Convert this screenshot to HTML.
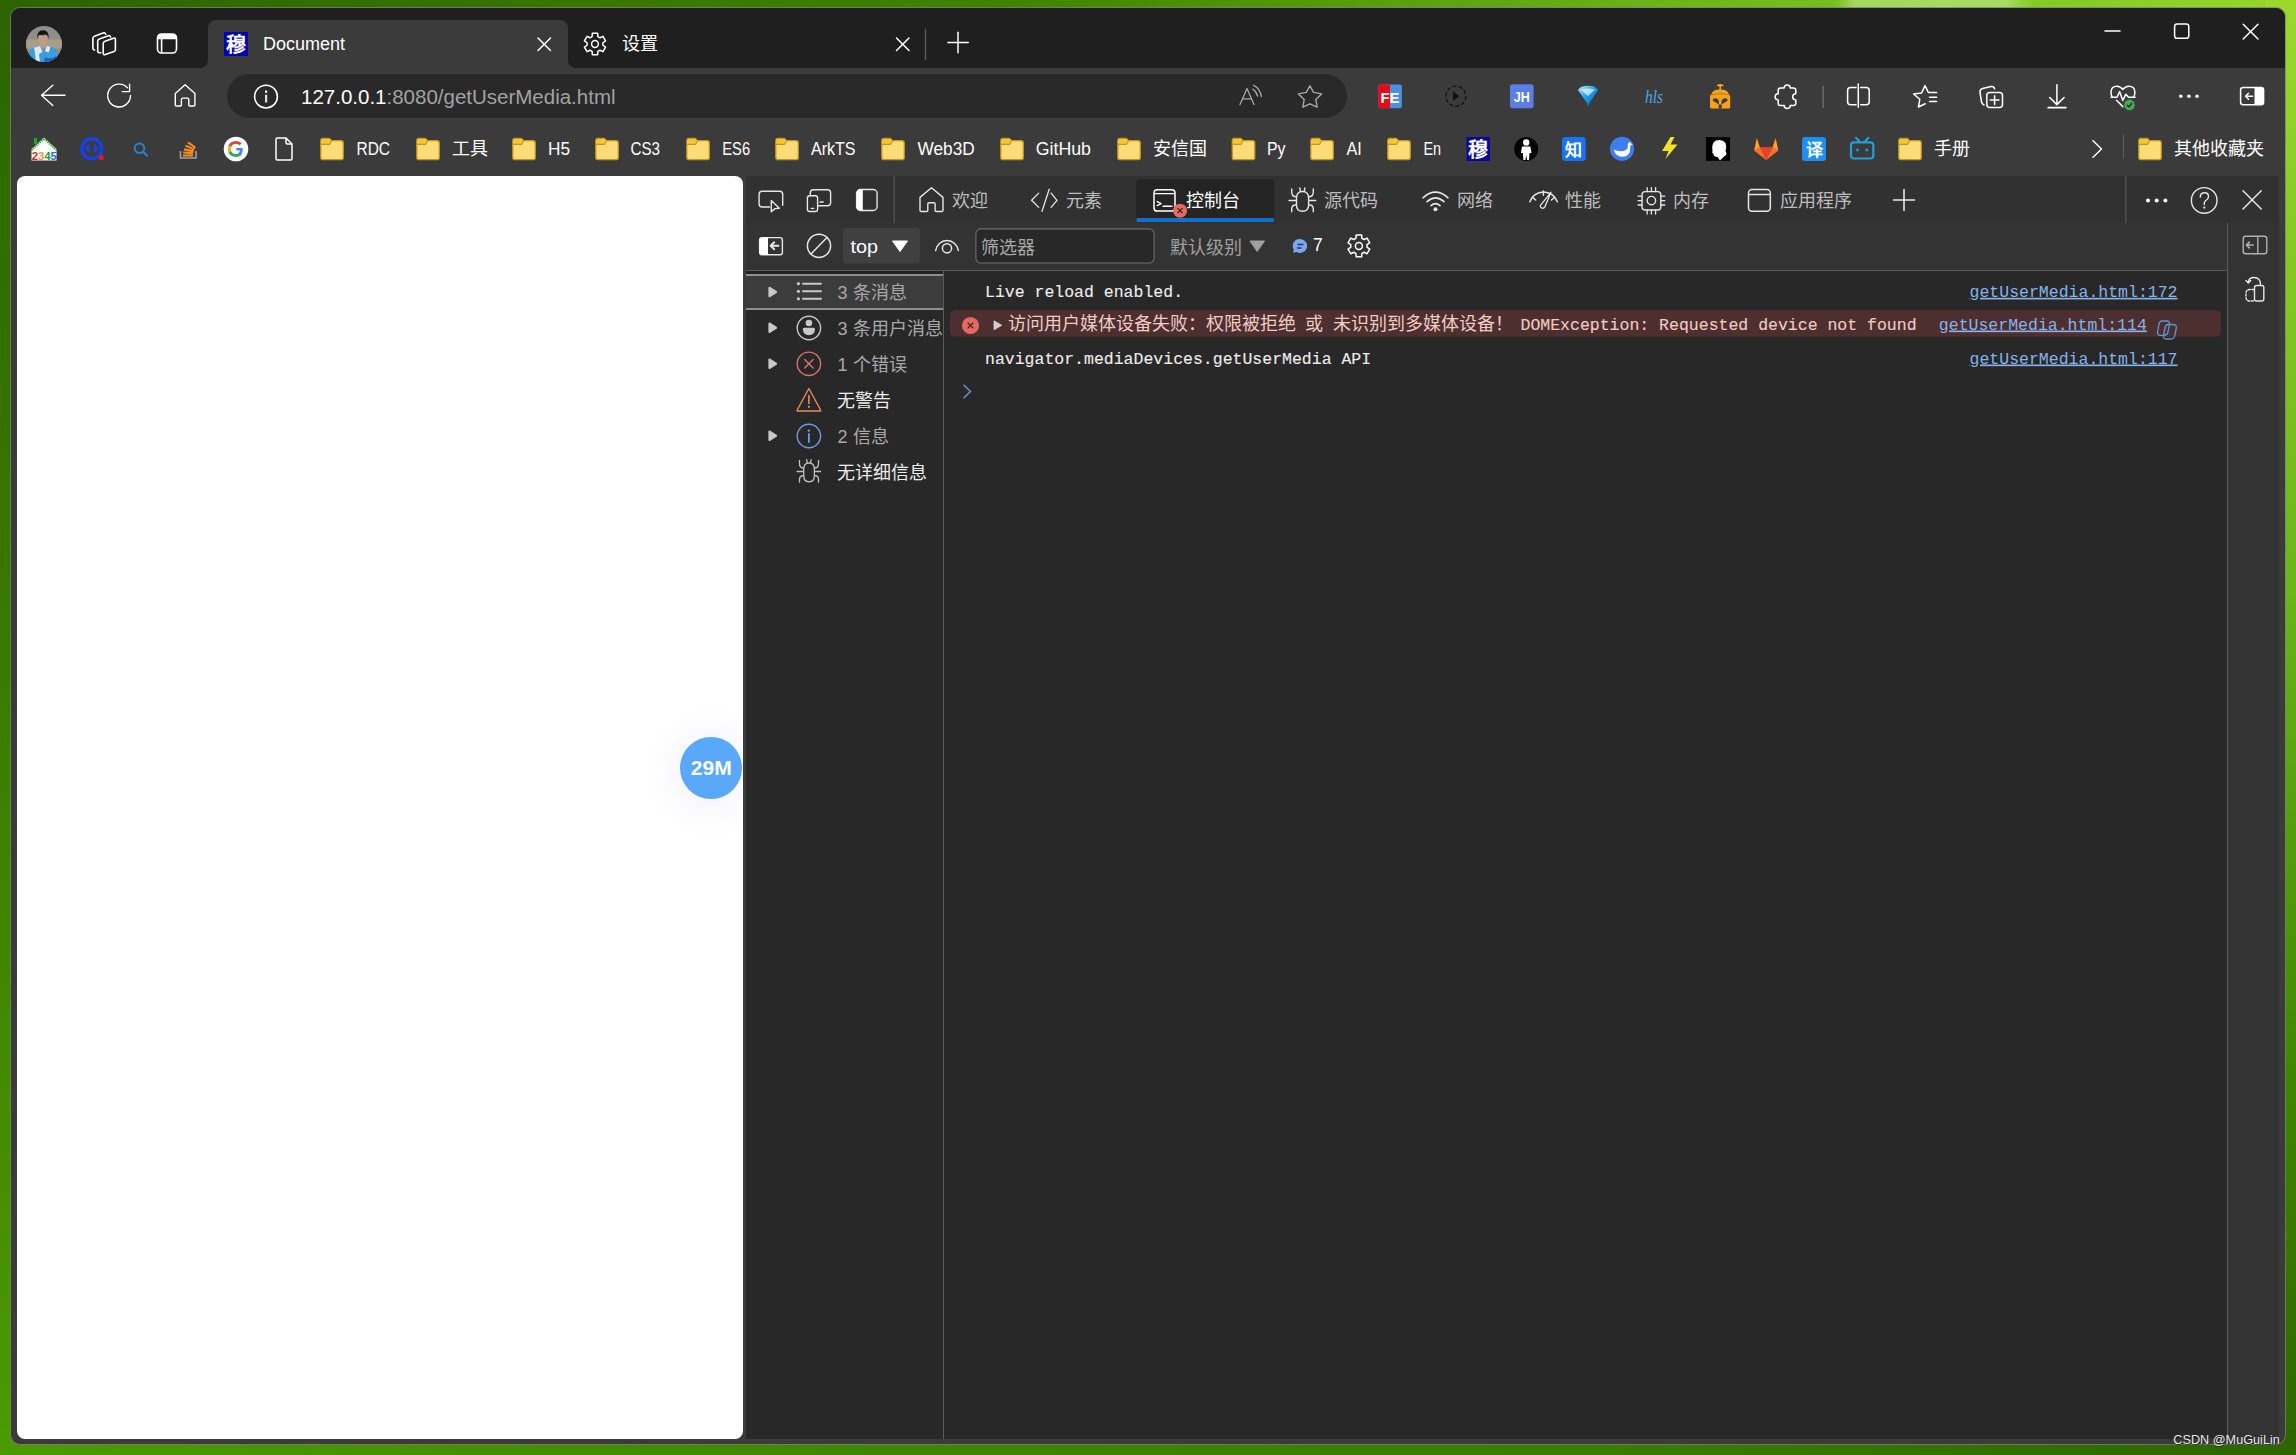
<!DOCTYPE html>
<html lang="zh-CN"><head><meta charset="utf-8">
<style>
*{box-sizing:border-box}
html,body{margin:0;padding:0}
body{width:2296px;height:1455px;overflow:hidden;position:relative;font-family:"Liberation Sans",sans-serif;
background:linear-gradient(90deg,#2c6300 0%,#3f8500 45%,#6fb81c 75%,#95d62c 100%);}
.a{position:absolute}
svg{position:absolute;overflow:visible}
.t{position:absolute;white-space:pre;line-height:1}
.mono{font-family:"Liberation Mono",monospace}
</style></head><body>
<!-- background shading -->
<div class="a" style="left:0;top:0;width:2296px;height:1455px;background:linear-gradient(180deg,rgba(0,0,0,0) 0%,rgba(0,0,0,0) 40%,rgba(40,90,0,.35) 100%)"></div>
<div class="a" style="left:0;top:0;width:30px;height:1455px;background:linear-gradient(180deg,#2c6400 0%,#3a7d00 50%,#4a9a00 100%)"></div>
<div class="a" style="left:2266px;top:0;width:30px;height:1455px;background:linear-gradient(180deg,#9ad82e 0%,#6cb51a 40%,#3f8400 75%,#2d6500 100%)"></div>
<div class="a" style="left:0;top:1430px;width:2296px;height:25px;background:linear-gradient(90deg,#4a9a00 0%,#3f8500 40%,#3a7c00 70%,#2d6500 100%)"></div>

<div class="a" style="left:1835px;top:0;width:200px;height:10px;background:linear-gradient(90deg,rgba(200,235,150,0) 0%,rgba(200,235,150,.55) 10%,rgba(200,235,150,.55) 85%,rgba(200,235,150,0) 100%)"></div>
<!-- window -->
<div class="a" style="left:10px;top:7px;width:2276px;height:1438px;border-radius:10px;background:rgba(120,130,110,.75)"></div>
<div class="a" id="win" style="left:11px;top:8px;width:2274px;height:1436px;border-radius:9px;background:#3b3b3b;overflow:hidden">
  <div class="a" style="left:0;top:0;width:2274px;height:60px;background:#1f1f1f"></div>
</div>

<!-- active tab -->
<div class="a" style="left:208px;top:20px;width:360px;height:48px;background:#3b3b3b;border-radius:8px 8px 0 0"></div>
<div class="a" style="left:200px;top:60px;width:8px;height:8px;background:radial-gradient(circle at 0 0,#1f1f1f 7.5px,#3b3b3b 8.5px)"></div>
<div class="a" style="left:568px;top:60px;width:8px;height:8px;background:radial-gradient(circle at 100% 0,#1f1f1f 7.5px,#3b3b3b 8.5px)"></div>

<!-- address bar -->
<div class="a" style="left:227px;top:74px;width:1120px;height:44px;border-radius:22px;background:#292929"></div>

<!-- page -->
<div class="a" style="left:17px;top:176px;width:726px;height:1263px;border-radius:8px;background:#fff;overflow:hidden">
  <div class="a" style="left:662.5px;top:560.5px;width:62.5px;height:62.5px;border-radius:50%;background:#5aa8fa;box-shadow:0 4px 40px rgba(90,90,200,.12)"></div>
</div>

<!-- devtools -->
<div class="a" id="dt" style="left:746px;top:176px;width:1533px;height:1263px;background:#282828;overflow:hidden">
  <div class="a" style="left:0;top:0;width:1533px;height:47px;background:#313131"></div>
  <div class="a" style="left:0;top:47px;width:1482px;height:48px;background:#333333;border-bottom:1px solid #5a5a5a"></div>
  <div class="a" style="left:1481px;top:47px;width:52px;height:1216px;background:#333333;border-left:1px solid #5a5a5a"></div>
  <div class="a" style="left:197px;top:95px;width:1px;height:1168px;background:#5a5a5a"></div>
</div>


<!-- ===== TAB STRIP / TOOLBAR OVERLAY ===== -->
<svg class="a" style="left:0;top:0" width="2296" height="1455" viewBox="0 0 2296 1455">
<defs>
<clipPath id="avc"><circle cx="44" cy="44" r="18"/></clipPath>
</defs>
<!-- avatar -->
<g clip-path="url(#avc)">
<rect x="26" y="26" width="36" height="36" fill="#8e8d88"/>
<rect x="26" y="39.5" width="36" height="9" fill="#ab9d8c"/>
<path d="M38.6,36 Q38.2,45.5 43,45.6 Q47.6,45.5 47.4,36Z" fill="#c59a84"/>
<path d="M37.2,39 Q36.6,30.3 43,30.3 Q49.3,30.3 48.8,39.5 Q48,35.5 46.5,34.5 Q42.5,35.2 39,34.8 Q38,36 37.2,39Z" fill="#161413"/>
<path d="M27,62 Q27.5,49 34,47.5 L40,46 L43.5,51 L47,46 L53,47.5 Q58.5,49.5 59,62Z" fill="#3c9ce0"/>
<path d="M34,47.8 L40,46 L42.5,52 L39,54 L40,62 L36,62 Q35,52 34,47.8Z" fill="#dfe8ee"/>
<path d="M47,46 L50.5,47 L48.5,52.5 L45,51Z" fill="#e8eef2"/>
<path d="M45,57 Q51,60 56,56 L57,62 L44,62Z" fill="#1f5fc8"/>
</g>
<g fill="none" stroke="#fff" stroke-width="1.6" stroke-linejoin="round" stroke-linecap="round">
<!-- tab actions -->
<path d="M105,41.2 L113.5,38.2 Q115.4,37.6 115.4,39.6 L115.4,49.7 Q115.4,51 114,51.6 L105.3,54.6 Q103.2,55.3 103.2,53.2 L103.2,43.5 Q103.2,41.8 105,41.2Z"/>
<path d="M100.8,52.8 L99.6,52.8 Q97.7,52.8 97.7,50.8 L97.7,41.2 Q97.7,39.6 99.3,39 L107.8,35.9 Q110,35.1 110.6,37"/>
<path d="M94.7,50 Q92.9,50 92.9,48 L92.9,38.4 Q92.9,36.8 94.5,36.2 L103,33.1 Q105.2,32.4 105.8,34.3"/>
<!-- vertical tabs -->
<rect x="157.5" y="34" width="19" height="19" rx="4"/>
<line x1="161.6" y1="38" x2="161.6" y2="53"/>
</g>
<path d="M157.5,38 Q157.5,34 161.5,34 L172.5,34 Q176.5,34 176.5,38 L176.5,39.2 L157.5,39.2Z" fill="#fff"/>
<!-- favicon -->
<rect x="224" y="32" width="24" height="24" fill="#0000b4"/>
<text x="236" y="51.5" font-size="20" font-weight="700" fill="#fff" text-anchor="middle">穆</text>
<text x="263" y="49.9" font-size="18" fill="#fff">Document</text>
<g stroke="#fff" stroke-width="1.5" stroke-linecap="round">
<line x1="538" y1="38" x2="550.5" y2="50.5"/><line x1="550.5" y1="38" x2="538" y2="50.5"/>
<line x1="896.5" y1="38" x2="909" y2="50.5"/><line x1="909" y1="38" x2="896.5" y2="50.5"/>
<line x1="947.8" y1="42.5" x2="968.3" y2="42.5"/><line x1="958" y1="32.3" x2="958" y2="52.8"/>
<line x1="2105" y1="31" x2="2120" y2="31"/>
<line x1="2243.2" y1="24.2" x2="2258" y2="39"/><line x1="2258" y1="24.2" x2="2243.2" y2="39"/>
</g>
<rect x="2174.6" y="24.1" width="14.2" height="14.2" rx="2.6" fill="none" stroke="#fff" stroke-width="1.5"/>
<line x1="925.5" y1="29" x2="925.5" y2="60" stroke="#5c5c5c" stroke-width="1.3"/>
<!-- settings gear tab -->
<path d="M592.13,36.53 L592.34,33.33 L597.66,33.33 L597.87,36.53 L600.03,37.78 L602.91,36.36 L605.57,40.97 L602.90,42.75 L602.90,45.25 L605.57,47.03 L602.91,51.64 L600.03,50.22 L597.87,51.47 L597.66,54.67 L592.34,54.67 L592.13,51.47 L589.97,50.22 L587.09,51.64 L584.43,47.03 L587.10,45.25 L587.10,42.75 L584.43,40.97 L587.09,36.36 L589.97,37.78Z" fill="none" stroke="#fff" stroke-width="1.5" stroke-linejoin="round"/>
<circle cx="595" cy="44" r="3.4" fill="none" stroke="#fff" stroke-width="1.5"/>
<text x="622" y="50" font-size="18" fill="#fff">设置</text>

<!-- toolbar nav -->
<g fill="none" stroke="#fff" stroke-width="1.4" stroke-linecap="round" stroke-linejoin="round">
<path d="M41.5,95.3 H65 M52.8,85.2 L41.5,95.3 L52.8,105.6"/>
<path d="M130.5,95.5 A11.4,11.4 0 1 1 127.5,87.8"/>
<path d="M129.6,84.3 V91.6 H122.3"/>
<path d="M175.3,105 V93.6 L185.1,84.8 L194.9,93.6 V105 Q194.9,106 193.9,106 H189.8 Q188.8,106 188.8,105 V99.4 Q188.8,98.1 187.5,98.1 H182.7 Q181.4,98.1 181.4,99.4 V105 Q181.4,106 180.4,106 H176.3 Q175.3,106 175.3,105Z"/>
<circle cx="266" cy="96.6" r="11.4" stroke-width="1.6"/>
</g>
<rect x="265" y="90.5" width="2.2" height="2.3" fill="#fff"/>
<rect x="265" y="94.7" width="2.2" height="7.8" fill="#e0e0e0"/>
<text font-size="20.5" y="104.3"><tspan x="301" fill="#fff">127.0.0.1</tspan><tspan fill="#a2a2a2">:8080/getUserMedia.html</tspan></text>
<g fill="none" stroke="#a8a8a8" stroke-width="1.3" stroke-linecap="round" stroke-linejoin="round">
<path d="M1240,104.6 L1247,88.5 L1254,104.6 M1243.1,98.8 H1250.9"/>
<path d="M1252.8,89.2 Q1256.5,91.5 1257.6,96"/>
<path d="M1253.7,85.3 Q1260.2,88.5 1261.4,96.6"/>
<path d="M1309.9,85.8 L1313.6,92.4 L1321.6,93.9 L1315.8,99.6 L1317.2,107.1 L1309.9,103.8 L1302.8,107.1 L1304.2,99.6 L1298.4,93.9 L1306.2,92.4Z" stroke-width="1.4"/>
</g>
</svg>

<svg class="a" style="left:0;top:0" width="2296" height="1455" viewBox="0 0 2296 1455">
<defs>
<g id="fold">
<path d="M0.8,19.8 V3 Q0.8,0.7 3,0.7 H9.3 L11.6,3 H21 Q23.3,3 23.3,5.3 V19.8 Q23.3,22 21,22 H3 Q0.8,22 0.8,19.8Z" fill="#fcdc78" stroke="#c4961a" stroke-width="1.3"/>
<path d="M1.3,6.5 V3.2 Q1.3,1.3 3.2,1.3 H9 L11.2,3.2 L9.2,6.5Z" fill="#f3c53a"/>
<path d="M0.9,6.8 H9.4 L11.6,3.2" fill="none" stroke="#c4961a" stroke-width="1.1"/>
</g>
</defs>
<!-- extension icons -->
<rect x="1378.2" y="84.4" width="23.7" height="23.8" rx="2" fill="#4b8fe0"/>
<path d="M1380.2,84.4 H1389.9 V108.2 H1380.2 Q1378.2,108.2 1378.2,106.2 V86.4 Q1378.2,84.4 1380.2,84.4Z" fill="#e60a14"/>
<text x="1390" y="102.6" font-size="15" font-weight="700" fill="#fff" text-anchor="middle" textLength="19" lengthAdjust="spacingAndGlyphs">FE</text>
<circle cx="1455.9" cy="96.2" r="10" fill="none" stroke="#111" stroke-width="1.3" stroke-dasharray="4 2.2"/>
<path d="M1453,91.3 L1459.3,96.2 L1453,101.1Z" fill="#111"/>
<rect x="1510" y="84.2" width="23.6" height="24" rx="2.5" fill="#5d7de6"/>
<text x="1521.8" y="102.3" font-size="14.5" font-weight="700" fill="#fff" text-anchor="middle" textLength="16" lengthAdjust="spacingAndGlyphs">JH</text>
<defs><linearGradient id="dia" x1="0" y1="0" x2="1" y2="1"><stop offset="0" stop-color="#bfeaff"/><stop offset=".5" stop-color="#1a9ae8"/><stop offset="1" stop-color="#0a4fa0"/></linearGradient></defs>
<path d="M1578,90 Q1580,85.7 1588,85.7 Q1596,85.7 1598,90 L1589.5,103 L1588.5,107 L1587,103Z" fill="url(#dia)"/>
<path d="M1581,89.5 Q1588,87.5 1595,89.5 L1588,96Z" fill="#e8f8ff" opacity=".7"/>
<text x="1645" y="103" font-family="Liberation Serif" font-style="italic" font-size="19" fill="#4aa6ea" textLength="18" lengthAdjust="spacingAndGlyphs">hls</text>
<path d="M1716.6,86.3 Q1717,84 1720.2,84 Q1723.4,84 1723.7,86.3Z M1719.4,86 H1721 V90.5 H1719.4Z" fill="#f6a521"/>
<path d="M1711.3,94.8 Q1712,89.6 1720.2,89.6 Q1728.3,89.6 1729,94.8Z" fill="#f6a521"/>
<path d="M1710,96.2 Q1710,94.6 1712,94.6 H1728.3 Q1730.2,94.6 1730.2,96.2 V107 Q1730.2,108.5 1728.6,108.5 H1712 Q1710,108.5 1710,107Z" fill="#f7a01a"/>
<path d="M1712.7,99.8 Q1713.3,98 1716,98.3 Q1718.8,99 1718.9,101.5 V104.6 Q1717.3,103 1714.8,102 Q1712.4,101.2 1712.7,99.8Z M1727.7,99.8 Q1727.1,98 1724.4,98.3 Q1721.6,99 1721.5,101.5 V104.6 Q1723.1,103 1725.6,102 Q1728,101.2 1727.7,99.8Z M1718.7,104.4 H1721.7 V108.6 H1718.7Z" fill="#3b3b3b"/>
<path d="M1712,94.6 Q1720.2,92 1728.3,94.6" fill="none" stroke="#b87010" stroke-width="0.8"/>
<g fill="none" stroke="#fff" stroke-width="1.5" stroke-linejoin="round" stroke-linecap="round">
<path d="M1780.5,88 H1784.2 A3,3 0 0 1 1790.2,88 H1793.5 Q1795.8,88 1795.8,90.3 V93.7 A3.1,3.1 0 0 0 1795.8,99.9 V103.3 Q1795.8,105.6 1793.5,105.6 H1790.2 A3,3 0 0 1 1784.2,105.6 H1780.5 Q1778.2,105.6 1778.2,103.3 V99.9 A3.1,3.1 0 0 1 1778.2,93.7 V90.3 Q1778.2,88 1780.5,88Z"/>
<path d="M1856,87.4 H1850.6 Q1847.6,87.4 1847.6,90.4 V101.7 Q1847.6,104.7 1850.6,104.7 H1856 M1860.7,87.4 H1866.2 Q1869.2,87.4 1869.2,90.4 V101.7 Q1869.2,104.7 1866.2,104.7 H1860.7"/>
<path d="M1858.3,84 V107.3"/>
<path d="M1925.2,103.8 L1918.4,107 L1919.8,99.3 L1913.6,94 L1921.6,93 L1925,85.6 L1928.4,92.5 H1936.6 M1929.5,97.2 H1936.6 M1929.5,101.6 H1936.6"/>
<path d="M1994.6,88.8 Q1994,86 1991,86.6 L1982.6,88.5 Q1979.6,89.3 1980,92.3 L1981.5,102 Q1982,104 1984,105"/>
<rect x="1986.8" y="92.6" width="15.7" height="15" rx="3"/>
<path d="M1994.6,95.8 V104.5 M1990.3,100.1 H1999"/>
<path d="M2056.9,84.8 V104.4 M2049.7,97.5 L2056.9,104.6 L2064.1,97.5"/>
<path d="M2048.2,107.7 H2065.8" stroke-width="1.7"/>
<path d="M2116.5,100.3 L2122.8,106.6 M2112.2,97.2 Q2111,95 2111,92.3 Q2111,86.2 2117,86.2 Q2120.5,86.2 2122.8,89.5 Q2125.2,86.2 2128.8,86.2 Q2134.9,86.2 2134.9,92.3 Q2134.9,95 2133.6,97.2"/>
<path d="M2111,97.2 H2117 L2119.6,91.6 L2122.8,100.4 L2125.9,94.2 L2128.5,97.2 H2135"/>
<rect x="2240.6" y="87.5" width="23" height="17.2" rx="2.5"/>
<path d="M2252.5,96.2 H2245.5 M2248.5,93.2 L2245.5,96.2 L2248.5,99.2"/>
</g>
<line x1="1823.2" y1="86" x2="1823.2" y2="108" stroke="#6a6a6a" stroke-width="1.5"/>
<circle cx="2129.5" cy="104.9" r="5.3" fill="#3fae4a"/>
<path d="M2127,105 L2128.8,106.8 L2132,103" fill="none" stroke="#1a1a1a" stroke-width="1.3"/>
<path d="M2254.5,87.5 H2261.1 Q2263.6,87.5 2263.6,90 V102.2 Q2263.6,104.7 2261.1,104.7 H2254.5Z" fill="#fff"/>
<circle cx="2180.8" cy="96.2" r="1.8" fill="#fff"/><circle cx="2188.9" cy="96.2" r="1.8" fill="#fff"/><circle cx="2197" cy="96.2" r="1.8" fill="#fff"/>

<!-- bookmarks -->
<path d="M31.5,149 L44,137.5 L56.5,149 V160.5 H31.5Z" fill="#fff"/>
<path d="M31.5,150 L44,138.5 L56.5,150" fill="none" stroke="#2a9a2a" stroke-width="2.2" stroke-dasharray="1.3 0.9"/>
<rect x="34" y="138" width="3" height="6" fill="#2aa02a"/>
<g font-size="11" font-weight="700" font-family="Liberation Sans"><text x="31.8" y="159.5" fill="#e02424" textLength="6.3" lengthAdjust="spacingAndGlyphs">2</text><text x="38.1" y="159.5" fill="#f09a30" textLength="6.3" lengthAdjust="spacingAndGlyphs">3</text><text x="44.4" y="159.5" fill="#2a9a2a" textLength="6.1" lengthAdjust="spacingAndGlyphs">4</text><text x="50.4" y="159.5" fill="#2070d0" textLength="6.1" lengthAdjust="spacingAndGlyphs">5</text></g>
<circle cx="91.8" cy="148.7" r="10" fill="none" stroke="#1740f0" stroke-width="3.2"/>
<path d="M88.5,146 L85.8,148.7 L88.5,151.4 Z M95,146 L97.7,148.7 L95,151.4Z" fill="#1740f0" stroke="#1740f0" stroke-width="2"/>
<circle cx="101.3" cy="157.6" r="2.6" fill="#e81818"/>
<circle cx="139.5" cy="148.3" r="4.8" fill="none" stroke="#2a7fd4" stroke-width="2"/>
<path d="M143,151.8 L147,155.8" stroke="#2a7fd4" stroke-width="2.2" stroke-linecap="round"/>
<path d="M180.5,151 V158 H196 V151" fill="none" stroke="#a0a0a0" stroke-width="1.6"/>
<g stroke="#f08a24" stroke-width="2.2"><line x1="183" y1="155.5" x2="193" y2="155.5"/><line x1="183.3" y1="152.5" x2="193.2" y2="153.3"/><line x1="184" y1="149.3" x2="193.6" y2="151.3"/><line x1="185.5" y1="145.8" x2="194.3" y2="149.5"/><line x1="188" y1="142.3" x2="195.5" y2="147.8"/></g>
<circle cx="236" cy="149" r="12.3" fill="#fff"/>
<path d="M242.8,148 H236.3 V150.6 H240 Q239.2,154.2 235.8,154.2 Q230.6,154 230.6,149 Q230.6,143.8 235.9,143.7 Q238.2,143.7 239.7,145.1 L241.6,143.2 Q239.5,141.2 235.9,141.2 Q228,141.3 228,149 Q228,156.7 235.9,156.8 Q243.2,156.7 242.8,148Z" fill="#4285f4"/>
<path d="M228.9,145.3 L231.2,146.9 Q232.4,143.7 235.9,143.7 Q238.2,143.7 239.7,145.1 L241.6,143.2 Q239.5,141.2 235.9,141.2 Q231,141.3 228.9,145.3Z" fill="#ea4335"/>
<path d="M228.9,145.3 Q227,149 228.9,152.7 L231.1,151 Q230.2,149 231.2,146.9Z" fill="#fbbc05"/>
<path d="M228.9,152.7 Q231,156.8 235.9,156.8 Q239.7,156.8 241.7,154.6 L239.6,152.9 Q238.3,154.2 235.8,154.2 Q232.2,154.2 231.1,151Z" fill="#34a853"/>
<path d="M277.5,138 H286 L292,144 V158.5 Q292,160 290.5,160 H277.5 Q276,160 276,158.5 V139.5 Q276,138 277.5,138Z M286,138 V142.5 Q286,144 287.5,144 H292" fill="none" stroke="#fff" stroke-width="1.5" stroke-linejoin="round"/>
<rect x="1466.5" y="137" width="23.5" height="24" fill="#0a0a9a"/>
<text x="1478.2" y="156.5" font-size="20" font-weight="700" fill="#fff" text-anchor="middle">穆</text>
<circle cx="1526.2" cy="149" r="12" fill="#050505"/>
<circle cx="1526.2" cy="142.5" r="3.2" fill="#fff"/>
<path d="M1522,146.5 H1530.4 L1531.5,153 H1529.5 L1529,160 H1527 L1526.2,155 L1525.4,160 H1523.4 L1522.9,153 H1520.9Z" fill="#fff"/>
<rect x="1562" y="137" width="23.8" height="24" rx="3" fill="#1772f6"/>
<text x="1573.9" y="156" font-size="17" font-weight="700" fill="#fff" text-anchor="middle">知</text>
<circle cx="1622" cy="148.8" r="12.1" fill="#3d7ff0"/>
<path d="M1613.8,149.5 Q1617,151.3 1621.5,151.2 Q1627.6,150.8 1627.8,146.5 V144.5 Q1627.8,142.3 1629.6,142.3 Q1631.2,142.3 1631.4,143.8 L1633,144.8 L1630.6,145.1 L1630.2,147.5 Q1630.5,156.8 1622.5,156.8 Q1615.3,156.7 1613.8,149.5Z" fill="#fff"/>
<path d="M1670.5,137 L1662,151 H1668.5 L1665.5,159 L1677.5,144.5 H1670.5 L1674.5,137Z" fill="#f5e02c"/>
<rect x="1706" y="137" width="24" height="23.8" fill="#000"/>
<path d="M1712.5,151 Q1711,143 1716,140.5 Q1722,138.5 1725.5,143 Q1727,147 1725.5,151 Q1728,155 1724,156.5 L1720,160.5 L1717.5,157 Q1713.5,157 1713.5,154 Q1711.5,153 1712.5,151Z" fill="#fff"/>
<path d="M1766.2,160 L1754.2,150.5 L1756.8,138.3 L1759.8,147.2 H1772.6 L1775.6,138.3 L1778.2,150.5Z" fill="#e24329"/>
<path d="M1766.2,160 L1754.2,150.5 L1759.8,147.2Z M1766.2,160 L1778.2,150.5 L1772.6,147.2Z" fill="#fc6d26"/>
<path d="M1766.2,160 L1759.8,147.2 H1772.6Z" fill="#e24329"/>
<path d="M1754.2,150.5 L1756.8,138.3 L1759.8,147.2Z M1778.2,150.5 L1775.6,138.3 L1772.6,147.2Z" fill="#fca326"/>
<rect x="1802" y="137" width="24" height="24" rx="3" fill="#1e8ff0"/>
<text x="1814" y="156" font-size="17" font-weight="700" fill="#fff" text-anchor="middle">译</text>
<g fill="none" stroke="#20a0d8" stroke-width="2.2" stroke-linecap="round"><rect x="1851" y="142.3" width="22.3" height="16.2" rx="3"/><path d="M1856,137.8 L1859.5,141.5 M1868.5,137.8 L1865,141.5"/></g>
<circle cx="1857.5" cy="150" r="1.4" fill="#20a0d8"/><circle cx="1866.8" cy="150" r="1.4" fill="#20a0d8"/>
<path d="M2092.5,140.2 L2101.5,149 L2092.5,157.8" fill="none" stroke="#fff" stroke-width="1.4"/>
<line x1="2123.5" y1="134.5" x2="2123.5" y2="158" stroke="#5c5c5c" stroke-width="1.2"/>
<use href="#fold" x="320" y="137.6"/>
<text x="356.5" y="155" font-size="18" fill="#fff" textLength="33.5" lengthAdjust="spacingAndGlyphs">RDC</text>
<use href="#fold" x="416" y="137.6"/>
<text x="452" y="155.3" font-size="18" fill="#fff">工具</text>
<use href="#fold" x="512" y="137.6"/>
<text x="548" y="155" font-size="18" fill="#fff" textLength="22" lengthAdjust="spacingAndGlyphs">H5</text>
<use href="#fold" x="595" y="137.6"/>
<text x="630.5" y="155" font-size="18" fill="#fff" textLength="29.5" lengthAdjust="spacingAndGlyphs">CS3</text>
<use href="#fold" x="686" y="137.6"/>
<text x="722.3" y="155" font-size="18" fill="#fff" textLength="27.8" lengthAdjust="spacingAndGlyphs">ES6</text>
<use href="#fold" x="775" y="137.6"/>
<text x="811" y="155" font-size="18" fill="#fff" textLength="44.5" lengthAdjust="spacingAndGlyphs">ArkTS</text>
<use href="#fold" x="881" y="137.6"/>
<text x="917.5" y="155" font-size="18" fill="#fff" textLength="57.3" lengthAdjust="spacingAndGlyphs">Web3D</text>
<use href="#fold" x="1000" y="137.6"/>
<text x="1035.7" y="155" font-size="18" fill="#fff" textLength="55.3" lengthAdjust="spacingAndGlyphs">GitHub</text>
<use href="#fold" x="1117" y="137.6"/>
<text x="1152.5" y="155.3" font-size="18" fill="#fff">安信国</text>
<use href="#fold" x="1231.5" y="137.6"/>
<text x="1267" y="155" font-size="18" fill="#fff" textLength="18.5" lengthAdjust="spacingAndGlyphs">Py</text>
<use href="#fold" x="1310" y="137.6"/>
<text x="1346.5" y="155" font-size="18" fill="#fff" textLength="15.3" lengthAdjust="spacingAndGlyphs">AI</text>
<use href="#fold" x="1387" y="137.6"/>
<text x="1423.4" y="155" font-size="18" fill="#fff" textLength="17.6" lengthAdjust="spacingAndGlyphs">En</text>
<use href="#fold" x="1898" y="137.6"/>
<text x="1934.3" y="155.3" font-size="18" fill="#fff">手册</text>
<use href="#fold" x="2138" y="137.6"/>
<text x="2174" y="155.3" font-size="18" fill="#fff">其他收藏夹</text>
</svg>

<!-- ===== DEVTOOLS ===== -->
<svg class="a" style="left:0;top:0" width="2296" height="1455" viewBox="0 0 2296 1455"><defs><g id="bug"><path d="M0,-9 Q6.1,-9 6.1,-2.5 V4.5 Q6.1,10.8 0,10.8 Q-6,10.8 -6,4.5 V-2.5 Q-6,-9 0,-9Z M-2.7,-12.5 L-2,-9.2 M2.4,-12.5 L1.7,-9.2 M-6,-3.7 Q-10.8,-3.7 -10.8,-8.5 V-11.5 M6.1,-3.7 Q10.8,-3.7 10.8,-8.5 V-11.5 M-6,0 H-13.5 M6.1,0 H13.2 M-6,4.2 Q-10.8,4.2 -10.8,8.5 V11.2 M6.1,4.2 Q10.8,4.2 10.8,8.5 V11.2"/></g></defs>
<!-- active tab -->
<path d="M1136.3,222 V183 Q1136.3,179 1140.3,179 H1270 Q1274,179 1274,183 V222Z" fill="#242424"/>
<rect x="1136.3" y="218" width="137.7" height="4" rx="1.5" fill="#1370c8"/>
<line x1="894.2" y1="176" x2="894.2" y2="223" stroke="#505050" stroke-width="1.5"/>
<line x1="2125.8" y1="176" x2="2125.8" y2="223" stroke="#505050" stroke-width="1.5"/>
<g fill="none" stroke="#e6e6e6" stroke-width="1.4" stroke-linecap="round" stroke-linejoin="round">
<!-- inspect -->
<path d="M769.6,207 H762.1 Q759.1,207 759.1,204 V194.3 Q759.1,191.3 762.1,191.3 H779.7 Q782.7,191.3 782.7,194.3 V205.3"/>
<path d="M771.3,200.6 L779.3,208.3 L775,208.6 L771.3,211.8Z"/>
<!-- device -->
<path d="M810.3,195.6 V192.8 Q810.3,189.8 813.3,189.8 H827.6 Q830.6,189.8 830.6,192.8 V202.7 Q830.6,205.7 827.6,205.7 H818"/>
<rect x="807.4" y="195.7" width="10.2" height="15.8" rx="2.3"/>
<path d="M820,202 H823.2 M811.3,208.4 H813.7"/>
<!-- dock -->
<rect x="856.6" y="189.5" width="20.5" height="21" rx="4"/>
<!-- home -->
<path d="M920,210.3 V197.4 L931.5,187.8 L943,197.4 V210.3 Q943,211.5 941.8,211.5 H936.3 Q935.1,211.5 935.1,210.3 V204 Q935.1,202.8 933.9,202.8 H929 Q927.8,202.8 927.8,204 V210.3 Q927.8,211.5 926.6,211.5 H921.2 Q920,211.5 920,210.3Z"/>
<!-- </> -->
<path d="M1038.7,193.1 L1031.6,200.3 L1038.7,207.4 M1049.2,189.2 L1042,211.3 M1051.1,193.1 L1057,200.3 L1051.1,207.4" stroke-width="1.3"/>
<!-- console -->
<rect x="1154" y="189.8" width="21" height="21.3" rx="3.2" stroke="#fff" stroke-width="1.5"/>
<path d="M1154.4,193.6 H1174.6" stroke="#fff" stroke-width="1.3"/>
<path d="M1157.2,201.6 L1161,203.6 L1157.2,205.6 M1163,206.2 H1172" stroke="#fff" stroke-width="1.4"/>
<!-- bug -->
<use href="#bug" transform="translate(1302.5,200.5)" stroke-width="1.4"/>
<!-- wifi -->
<path d="M1423,197.8 Q1435.5,186.5 1448,197.8 M1427,201.7 Q1435.5,194 1444,201.7 M1431,205.6 Q1435.5,201.5 1440,205.6" stroke-width="1.6"/>
<!-- perf -->
<path d="M1529.8,201.8 A14.5,14.5 0 0 1 1557.3,201.8" stroke-width="1.5"/>
<path d="M1532.8,197.6 L1535.7,200 M1543.4,190.9 V195.2 M1554.3,197.6 L1551.4,200" stroke-width="1.4"/>
<path d="M1551,192.3 L1545,206.6 Q1543.8,208.8 1541.6,208 Q1539.6,207 1540.8,204.8Z" stroke-width="1.3"/>
<!-- memory -->
<rect x="1642" y="191.6" width="18.8" height="18.4" rx="3.2" stroke-width="1.4"/>
<circle cx="1651.4" cy="200.6" r="4.2" stroke-width="1.4"/>
<path d="M1647.2,187.6 V191.6 M1651.4,187.6 V191.6 M1655.6,187.6 V191.6 M1647.2,210 V214 M1651.4,210 V214 M1655.6,210 V214 M1638,196.2 H1642 M1638,200.6 H1642 M1638,205 H1642 M1660.8,196.2 H1664.8 M1660.8,200.6 H1664.8 M1660.8,205 H1664.8" stroke-width="1.3"/>
<!-- app -->
<rect x="1748.5" y="189.5" width="21.8" height="21.8" rx="3.5" stroke-width="1.5"/>
<path d="M1748.8,194.5 H1770" stroke-width="1.4"/>
<!-- plus -->
<path d="M1893.5,200 H1914.5 M1904,189.5 V210.5" stroke-width="1.6"/>
<!-- help/close -->
<circle cx="2204.2" cy="200.4" r="12.8" stroke-width="1.4"/>
<path d="M2200.3,197 Q2200.3,192.8 2204.5,192.8 Q2208.5,192.8 2208.5,196.5 Q2208.5,199 2205.8,200.5 Q2204.3,201.5 2204.3,203.5 V204.5" stroke-width="1.4"/>
<path d="M2243,190.7 L2261.2,209 M2261.2,190.7 L2243,209" stroke-width="1.5"/>
</g>
<path d="M856.6,193.5 Q856.6,189.5 860.6,189.5 H862.8 V210.5 H860.6 Q856.6,210.5 856.6,206.5Z" fill="#fff"/>
<circle cx="2204.3" cy="207.6" r="1.1" fill="#e6e6e6"/>
<circle cx="1435.5" cy="209.3" r="2" fill="#e6e6e6"/>
<circle cx="2148" cy="200.4" r="2" fill="#fff"/><circle cx="2156.7" cy="200.4" r="2" fill="#fff"/><circle cx="2165.4" cy="200.4" r="2" fill="#fff"/>
<circle cx="1180.1" cy="210.7" r="7" fill="#e36b64"/>
<path d="M1177.6,208.2 L1182.6,213.2 M1182.6,208.2 L1177.6,213.2" stroke="#3a1a18" stroke-width="1.2"/>
<!-- tab labels -->
<g font-size="18" fill="#bcbcbc">
<text x="952" y="206.6">欢迎</text>
<text x="1066" y="206.6">元素</text>
<text x="1185.8" y="206.6" fill="#fff">控制台</text>
<text x="1323.7" y="206.6">源代码</text>
<text x="1457" y="206.6">网络</text>
<text x="1564.8" y="206.6">性能</text>
<text x="1673" y="206.6">内存</text>
<text x="1780" y="206.6">应用程序</text>
</g>

<!-- console toolbar -->
<g fill="none" stroke="#e6e6e6" stroke-width="1.4" stroke-linecap="round" stroke-linejoin="round">
<rect x="759.6" y="237.6" width="22.8" height="17.2" rx="2.4"/>
<path d="M778.4,245.8 H770.6 M774.2,242.3 L770.6,245.8 L774.2,249.3" stroke-width="1.9"/>
<circle cx="819" cy="245.8" r="11.6" stroke-width="1.5"/>
<path d="M811,254 L827,237.6" stroke-width="1.5"/>
<path d="M935.6,250.6 A11.5,11.5 0 0 1 958.4,250.6" stroke-width="1.5"/>
<circle cx="947" cy="248.3" r="4.6" stroke-width="1.5"/>
</g>
<path d="M762,237.6 H768 V254.8 H762 Q759.6,254.8 759.6,252.4 V240 Q759.6,237.6 762,237.6Z" fill="#fff"/>
<rect x="843" y="228" width="77" height="35.6" rx="3.5" fill="#404040"/>
<text x="850.5" y="253.4" font-size="19" fill="#fff" textLength="27.5" lengthAdjust="spacingAndGlyphs">top</text>
<path d="M892.5,241 H907.5 L900,251.5Z" fill="#fff" stroke="#fff" stroke-width="1" stroke-linejoin="round"/>
<rect x="975.9" y="228.9" width="178.2" height="34.1" rx="5" fill="#282828" stroke="#6e6e6e" stroke-width="1.1"/>
<text x="980.5" y="254.4" font-size="18" fill="#a8a8a8">筛选器</text>
<text x="1170" y="254.4" font-size="18" fill="#a0a0a0">默认级别</text>
<path d="M1250,241 H1264.5 L1257.2,251.5Z" fill="#a0a0a0" stroke="#a0a0a0" stroke-width="1" stroke-linejoin="round"/>
<path d="M1300,238.9 A7,7 0 1 1 1296.6,252 L1293,252.8 L1293.8,249.5 A7,7 0 0 1 1300,238.9Z" fill="#7aa7f0"/>
<path d="M1297.5,244.5 H1303.5 M1297,248 H1301.5" stroke="#1f3a66" stroke-width="1.6"/>
<text x="1313" y="251" font-size="17.5" fill="#fff">7</text>
<path d="M1355.96,238.24 L1356.17,234.94 L1361.63,234.94 L1361.84,238.24 L1364.06,239.53 L1367.03,238.05 L1369.76,242.79 L1367.00,244.62 L1367.00,247.18 L1369.76,249.01 L1367.03,253.75 L1364.06,252.27 L1361.84,253.56 L1361.63,256.86 L1356.17,256.86 L1355.96,253.56 L1353.74,252.27 L1350.77,253.75 L1348.04,249.01 L1350.80,247.18 L1350.80,244.62 L1348.04,242.79 L1350.77,238.05 L1353.74,239.53Z" fill="none" stroke="#fff" stroke-width="1.5" stroke-linejoin="round"/>
<circle cx="1358.9" cy="245.9" r="3.5" fill="none" stroke="#fff" stroke-width="1.5"/>

<!-- right activity bar icons -->
<g fill="none" stroke="#b0b0b0" stroke-width="1.4" stroke-linejoin="round" stroke-linecap="round">
<rect x="2243.2" y="236.3" width="23.6" height="17.5" rx="2.5"/>
<path d="M2257.8,236.5 V253.6"/>
<path d="M2253,245 H2246.5 M2249.3,242.2 L2246.5,245 L2249.3,247.8" stroke-width="1.7"/>
</g>
<g fill="none" stroke="#e6e6e6" stroke-width="1.4" stroke-linejoin="round" stroke-linecap="round">
<rect x="2254.5" y="285.5" width="9.3" height="15.5" rx="2"/>
<path d="M2254,289.5 H2250 Q2246,289.5 2246,293.5 V297 Q2246,301 2250,301 H2254" stroke-dasharray="2 1.6"/>
<path d="M2260.5,284.5 Q2260.5,277.5 2254,277.5 Q2248.5,277.5 2248.3,282.5 M2246,280.5 L2248.3,283 L2250.8,280.5"/>
</g>

<!-- sidebar -->
<rect x="746" y="271" width="197" height="3.5" fill="#232323"/>
<rect x="746" y="274" width="197" height="36" fill="#3c3c3c"/>
<rect x="746" y="274" width="197" height="2" fill="#8e8e8e"/>
<rect x="746" y="308" width="197" height="2" fill="#8e8e8e"/>
<g fill="#c8c8c8">
<path d="M769.6,288.0 L775.9,292.0 L769.6,296.0Z" stroke="#c8c8c8" stroke-width="2.4" stroke-linejoin="round"/>
<path d="M769.6,323.8 L775.9,327.8 L769.6,331.8Z" stroke="#c8c8c8" stroke-width="2.4" stroke-linejoin="round"/>
<path d="M769.6,359.8 L775.9,363.8 L769.6,367.8Z" stroke="#c8c8c8" stroke-width="2.4" stroke-linejoin="round"/>
<path d="M769.6,431.8 L775.9,435.8 L769.6,439.8Z" stroke="#c8c8c8" stroke-width="2.4" stroke-linejoin="round"/>
<circle cx="798.4" cy="283.7" r="1.6"/><circle cx="798.4" cy="291.3" r="1.6"/><circle cx="798.4" cy="298.8" r="1.6"/>
<circle cx="808.9" cy="323" r="3.3"/>
<path d="M804,327.8 H813.8 Q815,327.8 815,329.5 Q814.5,335.2 808.9,335.2 Q803.3,335.2 802.8,329.5 Q802.8,327.8 804,327.8Z"/>
</g>
<g fill="none" stroke-linecap="round" stroke-linejoin="round">
<path d="M803,283.7 H821 M803,291.3 H821 M803,298.8 H821" stroke="#c8c8c8" stroke-width="1.9"/>
<circle cx="808.9" cy="328" r="11.7" stroke="#c8c8c8" stroke-width="1.4"/>
<circle cx="808.9" cy="363.8" r="11.7" stroke="#e0706a" stroke-width="1.4"/>
<path d="M804.7,359.6 L813.1,368 M813.1,359.6 L804.7,368" stroke="#e0706a" stroke-width="1.4"/>
<path d="M808.9,388.5 L797.2,410 Q796.8,411 798,411 H819.8 Q821,411 820.6,410Z" stroke="#e8895c" stroke-width="1.4"/>
<path d="M808.9,395.5 V403.5" stroke="#e8895c" stroke-width="1.6"/>
<circle cx="808.9" cy="436" r="11.7" stroke="#6c9be6" stroke-width="1.4"/>
<path d="M808.9,434 V442" stroke="#6c9be6" stroke-width="1.8"/>
<use href="#bug" transform="translate(809,471.5) scale(0.88,0.95)" stroke="#c0c0c0" stroke-width="1.5"/>
</g>
<circle cx="808.9" cy="406.8" r="1.1" fill="#e8895c"/>
<circle cx="808.9" cy="430.6" r="1.2" fill="#6c9be6"/>
<g font-size="18">
<text x="837.5" y="299" fill="#a8a8a8">3 条消息</text>
<text x="837.5" y="335" fill="#a8a8a8">3 条用户消息</text>
<text x="837.5" y="371" fill="#a8a8a8">1 个错误</text>
<text x="837" y="407" fill="#ececec">无警告</text>
<text x="837.5" y="443" fill="#a8a8a8">2 信息</text>
<text x="837" y="479" fill="#ececec">无详细信息</text>
</g>

<!-- console messages -->
<g font-family="Liberation Mono" font-size="16.5" stroke-width="0.12">
<text x="985" y="297.2" fill="#ececec" stroke="#ececec">Live reload enabled.</text>
<text x="2177.5" y="296.8" fill="#86b3ec" text-anchor="end" text-decoration="underline">getUserMedia.html:172</text>
</g>
<rect x="949.8" y="310" width="1271.2" height="26.8" rx="5.5" fill="#4e2f2f"/>
<circle cx="970.5" cy="325.5" r="8.6" fill="#e46962"/>
<path d="M967.6,322.6 L973.4,328.4 M973.4,322.6 L967.6,328.4" stroke="#3b1a18" stroke-width="1.2"/>
<path d="M994,320.8 L1001.8,325.3 L994,329.8Z" fill="#cfcfcf" stroke="#cfcfcf" stroke-width="0.8" stroke-linejoin="round"/>
<text y="330.3" fill="#f0cbc4" font-family="Liberation Mono" font-size="16.5"><tspan x="1007.5" font-family="Liberation Sans" font-size="18">访问用户媒体设备失败：权限被拒绝</tspan><tspan> </tspan><tspan font-family="Liberation Sans" font-size="18">或</tspan><tspan> </tspan><tspan font-family="Liberation Sans" font-size="18">未识别到多媒体设备！</tspan><tspan> </tspan><tspan x="1520.5" dy="-0.5" stroke="#f0cbc4" stroke-width="0.12">DOMException: Requested device not found</tspan></text>
<text x="2146.8" y="329.5" fill="#86b3ec" text-anchor="end" font-family="Liberation Mono" font-size="16.5" text-decoration="underline">getUserMedia.html:114</text>
<g fill="none" stroke="#5f95d8" stroke-width="1.3" stroke-linejoin="round">
<path d="M2162,321 H2166.5 Q2170,321 2169.5,324 L2168,332 Q2167.3,335.3 2164,335.3 H2160.5 Q2157,335.3 2157.6,332 L2159,324 Q2159.6,321 2162,321Z"/>
<path d="M2168.2,324.5 H2172.8 Q2176.8,324.5 2176.3,328 L2174.8,335.5 Q2174.2,339 2170.8,339 H2166.5 Q2163,339 2163.5,335.5 L2165,328 Q2165.6,324.5 2168.2,324.5Z"/>
</g>
<g font-family="Liberation Mono" font-size="16.5" stroke-width="0.12">
<text x="985" y="363.7" fill="#ececec" stroke="#ececec">navigator.mediaDevices.getUserMedia API</text>
<text x="2177.5" y="363.5" fill="#86b3ec" text-anchor="end" text-decoration="underline">getUserMedia.html:117</text>
</g>
<path d="M963.5,384.8 L970.5,391.5 L963.5,398.2" fill="none" stroke="#6d8fc8" stroke-width="1.5"/>
</svg>

<svg class="a" style="left:0;top:0" width="2296" height="1455" viewBox="0 0 2296 1455">
<text x="690.8" y="775" font-size="20" font-weight="700" fill="#fff" textLength="40.8" lengthAdjust="spacingAndGlyphs">29M</text>
<text x="2173.3" y="1443.8" font-size="13" fill="#000" opacity=".5" textLength="106.5" lengthAdjust="spacingAndGlyphs" transform="translate(0.8,0.8)">CSDN @MuGuiLin</text>
<text x="2173.3" y="1443.8" font-size="13" fill="#e8e8e8" textLength="106.5" lengthAdjust="spacingAndGlyphs">CSDN @MuGuiLin</text>
</svg>
</body></html>
